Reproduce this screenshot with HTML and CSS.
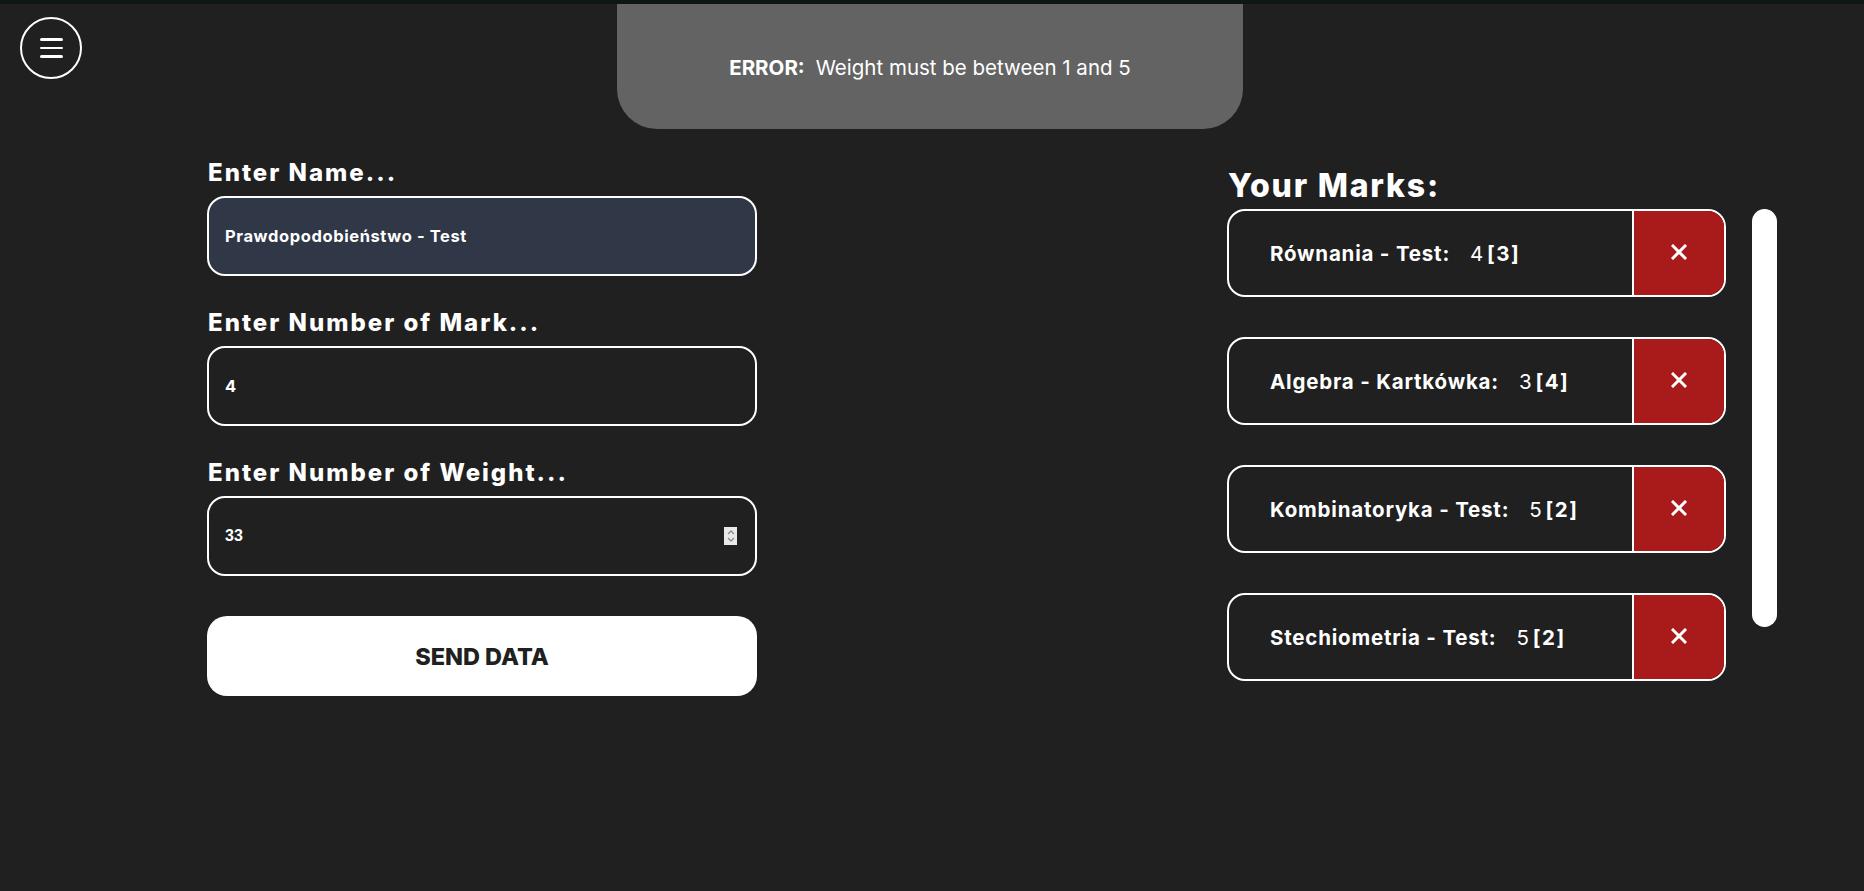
FILE: index.html
```html
<!DOCTYPE html>
<html lang="pl">
<head>
<meta charset="utf-8">
<title>Marks</title>
<link rel="stylesheet" href="styles.css">
</head>
<body>
<div class="topbar"></div>
<header class="header">
  <button class="menu-btn" aria-label="Menu">
    <span class="menu-line"></span>
    <span class="menu-line"></span>
    <span class="menu-line"></span>
  </button>
</header>
<div class="toast"><span class="toast-label">ERROR:</span><span class="toast-msg">Weight must be between 1 and 5</span></div>
<main class="main">
  <section class="form">
    <label class="field-label">Enter Name...</label>
    <div class="field field-filled"><input class="field-input" type="text" value="Prawdopodobieństwo - Test"></div>
    <label class="field-label">Enter Number of Mark...</label>
    <div class="field"><input class="field-input" type="text" value="4"></div>
    <label class="field-label">Enter Number of Weight...</label>
    <div class="field"><input class="field-input field-num" type="text" value="33"><span class="spinner"><svg width="12" height="18" viewBox="0 0 12 18"><path d="M3 7 L6 4 L9 7" fill="none" stroke="#8a8a8a" stroke-width="1.3"/><path d="M3 11 L6 14 L9 11" fill="none" stroke="#8a8a8a" stroke-width="1.3"/></svg></span></div>
    <button class="send-btn">SEND DATA</button>
  </section>
  <section class="marks">
    <h2 class="marks-title">Your Marks:</h2>
    <div class="marks-body">
      <ul class="mark-list">
        <li class="mark"><div class="mark-info"><span class="mark-name">Równania - Test:</span><span class="mark-value">4</span><span class="mark-weight">[3]</span></div><button class="mark-del" aria-label="Delete"><svg width="16" height="16" viewBox="0 0 16 16"><path d="M2 2 L14 14 M14 2 L2 14" stroke="#fff" stroke-width="3" stroke-linecap="square"/></svg></button></li>
        <li class="mark"><div class="mark-info"><span class="mark-name">Algebra - Kartkówka:</span><span class="mark-value">3</span><span class="mark-weight">[4]</span></div><button class="mark-del" aria-label="Delete"><svg width="16" height="16" viewBox="0 0 16 16"><path d="M2 2 L14 14 M14 2 L2 14" stroke="#fff" stroke-width="3" stroke-linecap="square"/></svg></button></li>
        <li class="mark"><div class="mark-info"><span class="mark-name">Kombinatoryka - Test:</span><span class="mark-value">5</span><span class="mark-weight">[2]</span></div><button class="mark-del" aria-label="Delete"><svg width="16" height="16" viewBox="0 0 16 16"><path d="M2 2 L14 14 M14 2 L2 14" stroke="#fff" stroke-width="3" stroke-linecap="square"/></svg></button></li>
        <li class="mark"><div class="mark-info"><span class="mark-name">Stechiometria - Test:</span><span class="mark-value">5</span><span class="mark-weight">[2]</span></div><button class="mark-del" aria-label="Delete"><svg width="16" height="16" viewBox="0 0 16 16"><path d="M2 2 L14 14 M14 2 L2 14" stroke="#fff" stroke-width="3" stroke-linecap="square"/></svg></button></li>
      </ul>
      <div class="scroll-thumb"></div>
    </div>
  </section>
</main>
</body>
</html>
```
FILE: styles.css
```css
* { box-sizing: border-box; }
html, body { margin: 0; padding: 0; }
body {
  background: #202020;
  color: #fff;
  font-family: "Inter", "Noto Sans", sans-serif;
  height: 891px;
  overflow: hidden;
}
.topbar { height: 4px; background: #0f1712; }
.header { height: 153px; padding: 13px 0 0 20px; }
.menu-btn {
  width: 62px; height: 62px;
  border: 2px solid #fff; border-radius: 50%;
  background: transparent;
  display: flex; flex-direction: column; align-items: center; justify-content: center;
  gap: 6px; padding: 0; margin: 0;
}
.menu-line { display: block; width: 23px; height: 2.5px; background: #fff; border-radius: 2px; }

.toast {
  position: absolute; top: 4px; left: 617px;
  width: 626px; height: 125px;
  background: #636363;
  border-radius: 0 0 40px 40px;
  display: flex; align-items: center; justify-content: center;
  font-size: 20.5px; padding-top: 2px;
}
.toast-label { font-weight: 700; margin-right: 11px; }
.toast-msg { font-weight: 400; }

.main {
  display: flex; justify-content: space-between; align-items: flex-start;
  padding: 0 87px 0 207px;
}
.form { width: 550px; display: flex; flex-direction: column; }
.field-label {
  font-size: 24px; font-weight: 800; letter-spacing: 2px;
  line-height: 32px; margin-bottom: 7px; padding-left: 1px;
}
.field {
  height: 80px; border: 2px solid #fff; border-radius: 18px;
  display: flex; align-items: center; padding: 0 18px 0 16px;
  margin-bottom: 31px;
}
.field-filled { background: #303746; }
.field-input {
  flex: 1; background: transparent; border: 0; outline: none; color: #fff;
  font-family: "Inter", sans-serif; font-weight: 700; font-size: 16.5px; letter-spacing: 0.6px; padding: 0; margin: 0;
}
.field-num { font-family: "Liberation Sans", Arial, sans-serif; font-size: 16px; letter-spacing: 0; }
.spinner {
  width: 13px; height: 18px; background: #e9e9e9;
  display: flex; align-items: center; justify-content: center;
}
.send-btn {
  height: 80px; margin-top: 9px;
  background: #fff; color: #202020; border: 0; border-radius: 20px;
  font-family: "Inter", sans-serif; font-weight: 800; font-size: 23.5px;
}

.marks { width: 550px; padding-top: 11px; }
.marks-title { font-size: 32px; font-weight: 800; line-height: 36px; letter-spacing: 1.8px; margin: 0 0 5px 1px; }
.marks-body { display: flex; align-items: flex-start; gap: 26px; }
.mark-list { list-style: none; margin: 0; padding: 0; width: 499px; display: flex; flex-direction: column; gap: 40px; }
.mark {
  height: 88px; border: 2px solid #fff; border-radius: 18px; overflow: hidden;
  display: flex;
}
.mark-info { flex: 1; display: flex; align-items: center; padding-left: 41px; font-size: 20.5px; letter-spacing: 0.8px; }
.mark-name { font-weight: 700; margin-right: 20px; }
.mark-value { font-weight: 400; margin-right: 3px; }
.mark-weight { font-weight: 700; letter-spacing: 1.5px; }
.mark-del {
  width: 92px; border: 0; border-left: 2px solid #fff; background: #a91a1a;
  display: flex; align-items: center; justify-content: center; padding: 0 0 2px 0;
}
.scroll-thumb { width: 25px; height: 418px; background: #fff; border-radius: 13px; }
```
